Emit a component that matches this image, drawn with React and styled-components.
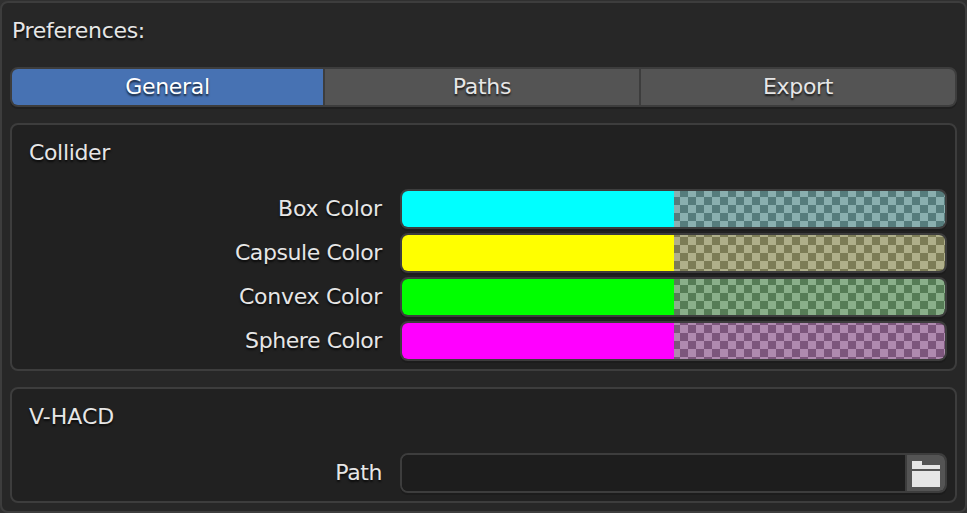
import React from 'react';
import styled, { createGlobalStyle } from 'styled-components';

const Global = createGlobalStyle`
  * { box-sizing: border-box; }
  body { margin: 0; background: #303030; }
`;

const Window = styled.main`
  width: 967px;
  height: 512px;
  margin-top: 1px;
  padding: 0 8px;
  display: flex;
  flex-direction: column;
  border: 2px solid #3d3d3d;
  border-radius: 8px;
  background: #272727;
  color: #e6e6e6;
  font: 22px/36px 'DejaVu Sans', sans-serif;
  text-shadow: 0 2px 2px rgba(0, 0, 0, 0.7);

  & > * {
    flex-shrink: 0;
  }
`;

const Title = styled.header`
  height: 64px;
  padding: 10px 2px 0;
  letter-spacing: -0.33px;
`;

const Tabs = styled.nav`
  display: grid;
  grid-template-columns: 311px 314px 1fr;
  gap: 2px;
  height: 40px;
  margin-bottom: 16px;
  border: 2px solid #3d3d3d;
  border-radius: 8px;
  background: #3d3d3d;
  overflow: hidden;
  box-shadow: 0 2px 0 #202020;
`;

const Tab = styled.button`
  border: 0;
  padding: 0 0 1px 0;
  font: inherit;
  letter-spacing: -0.3px;
  text-shadow: inherit;
  color: ${(p) => (p.$active ? '#fff' : '#e6e6e6')};
  background: ${(p) => (p.$active ? '#4772b3' : '#545454')};
`;

const Section = styled.section`
  height: ${(p) => p.$height}px;
  margin-bottom: 16px;
  padding: 0 8px 0 17px;
  border: 2px solid #3d3d3d;
  border-radius: 8px;
  background: #212121;

  &:last-child {
    margin-bottom: 0;
  }
`;

const Heading = styled.h2`
  height: 64px;
  margin: 0;
  padding-top: 10px;
  font: inherit;
  letter-spacing: ${(p) => p.$tracking || 0}px;
`;

const Rows = styled.div`
  display: grid;
  gap: 4px;
`;

const Row = styled.div`
  display: grid;
  grid-template-columns: 353px 547px;
  gap: 18px;
  height: 40px;
`;

const Label = styled.label`
  padding-top: 2px;
  text-align: right;
  letter-spacing: ${(p) => p.$tracking || 0}px;
`;

const Field = styled.div`
  display: flex;
  height: 40px;
  border: 2px solid #3d3d3d;
  border-radius: 8px;
  background: #1d1d1d;
  overflow: hidden;
  box-shadow: 0 2px 0 #1c1c1c;
`;

const Solid = styled.div`
  width: 272px;
  background: ${(p) => p.$color};
`;

const Checker = styled.div`
  flex: 1;
  background: repeating-conic-gradient(${(p) => p.$light} 0 25%, ${(p) => p.$dark} 0 50%);
  background-size: 16px 16px;
  background-position: 14px ${(p) => p.$offset}px;
`;

const PathInput = styled.input`
  width: 503px;
  border: 0;
  padding: 0 10px;
  background: #1d1d1d;
  color: inherit;
  font: inherit;
`;

const Browse = styled.button`
  flex: 1;
  display: flex;
  align-items: center;
  justify-content: flex-start;
  border: 0;
  border-left: 2px solid #3d3d3d;
  padding: 2px 0 0 5px;
  background: #545454;
`;

const colors = [
  { name: 'Box Color', tracking: -0.15, color: '#00ffff', light: '#8aafaf', dark: '#567c7c', offset: 6 },
  { name: 'Capsule Color', tracking: -0.4, color: '#ffff00', light: '#afaf8a', dark: '#7c7c56', offset: 10 },
  { name: 'Convex Color', tracking: -0.28, color: '#00ff00', light: '#8aaf8a', dark: '#567c56', offset: 14 },
  { name: 'Sphere Color', tracking: -0.42, color: '#ff00ff', light: '#af8aaf', dark: '#7c567c', offset: 2 },
];

const FolderIcon = () => (
  <svg width="28" height="26" viewBox="0 0 28 26" fill="#e6e6e6" shapeRendering="crispEdges" aria-hidden="true">
    <path d="M0 0h10v4h18v4H0z" />
    <path d="M0 10h28v16H0z" />
  </svg>
);

export default function App() {
  return (
    <>
      <Global />
      <Window>
        <Title>Preferences:</Title>
        <Tabs>
          <Tab $active>General</Tab>
          <Tab>Paths</Tab>
          <Tab>Export</Tab>
        </Tabs>
        <Section $height={248}>
          <Heading $tracking={-0.35}>Collider</Heading>
          <Rows>
            {colors.map((c) => (
              <Row key={c.name}>
                <Label $tracking={c.tracking}>{c.name}</Label>
                <Field>
                  <Solid $color={c.color} />
                  <Checker $light={c.light} $dark={c.dark} $offset={c.offset} />
                </Field>
              </Row>
            ))}
          </Rows>
        </Section>
        <Section $height={116}>
          <Heading>V-HACD</Heading>
          <Row>
            <Label htmlFor="path" $tracking={-0.4}>Path</Label>
            <Field>
              <PathInput id="path" />
              <Browse aria-label="Browse">
                <FolderIcon />
              </Browse>
            </Field>
          </Row>
        </Section>
      </Window>
    </>
  );
}
